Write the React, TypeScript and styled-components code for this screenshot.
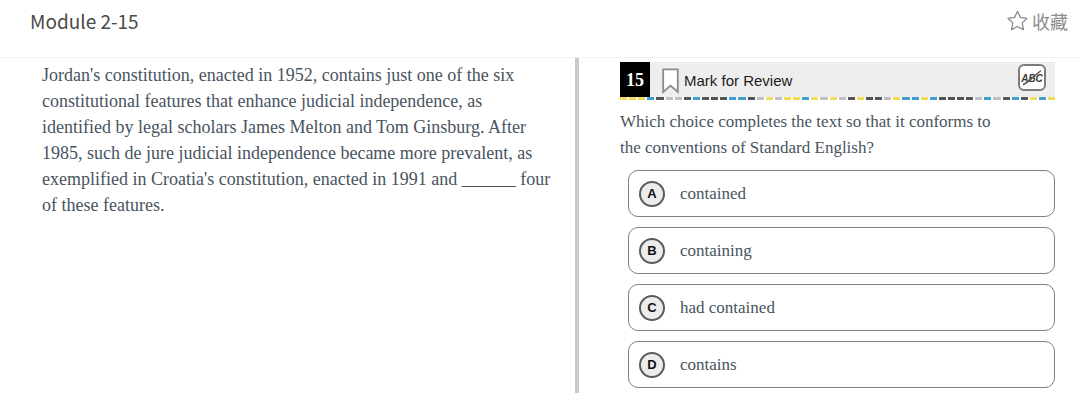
import React, { useState } from "react";
import styled, { createGlobalStyle } from "styled-components";

const serif = '"Liberation Serif", "Times New Roman", serif';
const sans = '"Liberation Sans", Arial, sans-serif';
const ui = '"Noto Sans CJK SC", "Noto Sans", sans-serif';

const GlobalStyle = createGlobalStyle`
  *, *::before, *::after { box-sizing: border-box; }
  body { margin: 0; background: #fff; color: #485460; font-family: ${serif}; }
  button { font: inherit; color: inherit; border: 0; padding: 0; background: none; cursor: pointer; }
`;

const Header = styled.header`
  display: flex;
  align-items: center;
  justify-content: space-between;
  height: 58px;
  padding: 0 12px 16px 30px;
  border-bottom: 1px solid #f2f2f2;
  font-family: ${ui};
`;

const Title = styled.h1`
  margin: 0;
  font-size: 19px;
  font-weight: 400;
  line-height: 26px;
  color: #4a4a4a;
`;

const FavoriteButton = styled.button`
  && {
    display: flex;
    align-items: center;
    gap: 4px;
    font-size: 18px;
    line-height: 26px;
    color: #8c8c8c;
  }
`;

const Panes = styled.main`
  display: grid;
  grid-template-columns: minmax(0, 575fr) 4px minmax(0, 501fr);
`;

const Passage = styled.p`
  margin: 0;
  padding: 4px 20px 0 42px;
  font-size: 18px;
  line-height: 26px;
`;

const Divider = styled.div`
  background: #c9c9c9;
`;

const Question = styled.section`
  padding: 4px 25px 5px 41px;
`;

const Toolbar = styled.div`
  display: flex;
  align-items: center;
  height: 35px;
  padding-right: 9px;
  background: #eeeeee;
`;

const NumberBadge = styled.span`
  display: flex;
  align-items: center;
  justify-content: center;
  width: 30px;
  height: 35px;
  padding-top: 2px;
  margin-right: 12px;
  background: #000;
  color: #fff;
  font-size: 18px;
  font-weight: 700;
`;

const MarkButton = styled.button`
  && {
    display: flex;
    align-items: center;
    gap: 5px;
    padding-top: 2px;
    margin-right: auto;
    font-family: ${sans};
    font-size: 15px;
    line-height: 26px;
    color: #1c1c1c;
  }
`;

const StrikeButton = styled.button`
  && {
    display: flex;
    align-items: center;
    justify-content: center;
    align-self: flex-start;
    width: 28px;
    height: 27px;
    margin-top: 2px;
    border: 2px solid #7c7c7c;
    border-radius: 6px;
    background: #fff;
  }
`;

const DashRow = styled.div`
  display: flex;
  gap: 2px;
  height: 3px;
`;

const dashColors: Record<string, string> = {
  y: "#f2dc5a",
  b: "#3fa0cf",
  k: "#555555",
  g: "#c0c0c0",
};

const Dash = styled.span<{ $tone: string }>`
  flex: 1;
  background: ${(p) => dashColors[p.$tone]};
`;

const Prompt = styled.legend`
  padding: 9px 40px 0 0;
  margin-bottom: 9px;
  font-size: 17px;
  line-height: 26px;
`;

const Choices = styled.fieldset`
  margin: 0;
  padding: 0;
  border: 0;
  min-width: 0;
`;

const ChoiceList = styled.div`
  display: flex;
  flex-direction: column;
  gap: 10px;
  padding-left: 8px;
`;

const Choice = styled.label`
  display: flex;
  align-items: center;
  gap: 15px;
  min-height: 47px;
  padding: 0 10px;
  border: 1px solid #808080;
  border-radius: 10px;
  font-size: 17px;
  line-height: 26px;
  cursor: pointer;
`;

const Bubble = styled.span`
  display: grid;
  place-items: center;
  width: 26px;
  height: 26px;
  border: 2px solid #5a5a5a;
  border-radius: 50%;
  background: #ececec;
  color: #111;
  font-family: ${sans};
  font-size: 13px;
  font-weight: 700;
  line-height: 22px;

  > * { grid-area: 1 / 1; }
  &:has(input:checked) { background: #324dc7; color: #fff; }
`;

const Radio = styled.input`
  appearance: none;
  width: 22px;
  height: 22px;
  margin: 0;
  border-radius: 50%;
  cursor: pointer;
`;

const DASHES = "yyybkggkbkkkbbkgygyybygygkykkgybbybkkkkgbgkbkyby";

const OPTIONS = [
  { letter: "A", text: "contained" },
  { letter: "B", text: "containing" },
  { letter: "C", text: "had contained" },
  { letter: "D", text: "contains" },
];

function StarIcon() {
  return (
    <svg width="21" height="21" viewBox="0 0 21 21" fill="none" stroke="#8c8c8c" strokeWidth="1.3" strokeLinejoin="round" aria-hidden="true">
      <path d="M10.5 1.4 13.4 7.4 20 8.3 15.2 12.9 16.4 19.6 10.5 16.5 4.6 19.6 5.8 12.9 1 8.3 7.6 7.4Z" />
    </svg>
  );
}

function BookmarkIcon() {
  return (
    <svg width="17" height="26" viewBox="0 0 17 26" fill="#fff" stroke="#8a8a8a" strokeWidth="1.8" aria-hidden="true">
      <path d="M1.2 1.4H15.8V24L8.5 17.6 1.2 24Z" />
    </svg>
  );
}

function StrikeIcon() {
  return (
    <svg width="24" height="20" viewBox="0 0 24 20" aria-hidden="true">
      <text x="12" y="14" textAnchor="middle" fontFamily="Liberation Sans, Arial, sans-serif" fontSize="10" fontStyle="italic" fontWeight="700" fill="#3a3a3a">
        ABC
      </text>
      <path d="M3.5 16.5C8 14.5 15 7 20.5 3" stroke="#555" strokeWidth="1.4" strokeLinecap="round" fill="none" />
    </svg>
  );
}

export default function App() {
  const [answer, setAnswer] = useState("");

  return (
    <>
      <GlobalStyle />
      <Header>
        <Title>Module 2-15</Title>
        <FavoriteButton type="button">
          <StarIcon />
          收藏
        </FavoriteButton>
      </Header>
      <Panes>
        <Passage>
          Jordan's constitution, enacted in 1952, contains just one of the six constitutional features that enhance
          judicial independence, as identified by legal scholars James Melton and Tom Ginsburg. After 1985, such de
          jure judicial independence became more prevalent, as exemplified in Croatia's constitution, enacted in 1991
          and ______ four of these features.
        </Passage>
        <Divider />
        <Question>
          <Toolbar>
            <NumberBadge>15</NumberBadge>
            <MarkButton type="button">
              <BookmarkIcon />
              Mark for Review
            </MarkButton>
            <StrikeButton type="button" aria-label="Cross out choices">
              <StrikeIcon />
            </StrikeButton>
          </Toolbar>
          <DashRow>
            {DASHES.split("").map((tone, i) => (
              <Dash key={i} $tone={tone} />
            ))}
          </DashRow>
          <Choices>
            <Prompt>Which choice completes the text so that it conforms to the conventions of Standard English?</Prompt>
            <ChoiceList>
              {OPTIONS.map(({ letter, text }) => (
                <Choice key={letter}>
                  <Bubble>
                    <Radio
                      type="radio"
                      name="answer"
                      value={letter}
                      checked={answer === letter}
                      onChange={() => setAnswer(letter)}
                    />
                    <span>{letter}</span>
                  </Bubble>
                  {text}
                </Choice>
              ))}
            </ChoiceList>
          </Choices>
        </Question>
      </Panes>
    </>
  );
}
